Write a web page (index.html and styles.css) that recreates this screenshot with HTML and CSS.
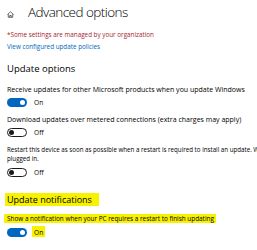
FILE: index.html
```html
<!DOCTYPE html>
<html>
<head>
<meta charset="utf-8">
<link rel="stylesheet" href="styles.css">
</head>
<body>
<div class="page">
  <div class="header">
    <svg class="home" width="7" height="7" viewBox="0 0 14 14"><path d="M1 7 L7 1.5 L13 7 M2.5 5.8 V12.5 H11.5 V5.8 M5.5 12.5 V9 H8.5 V12.5" fill="none" stroke="#222" stroke-width="1.3"/></svg>
    <h1 class="title">Advanced options</h1>
  </div>
  <p class="managed">*Some settings are managed by your organization</p>
  <p class="link">View configured update policies</p>
  <h2 class="section">Update options</h2>
  <p class="label">Receive updates for other Microsoft products when you update Windows</p>
  <div class="toggle-row"><span class="toggle on"><span class="knob"></span></span><span class="state">On</span></div>
  <p class="label">Download updates over metered connections (extra charges may apply)</p>
  <div class="toggle-row"><span class="toggle off"><span class="knob"></span></span><span class="state">Off</span></div>
  <p class="label wrap">Restart this device as soon as possible when a restart is required to install an update. Windows will display a notice before the restart, and your device must be on and<br>plugged in.</p>
  <div class="toggle-row r3"><span class="toggle off"><span class="knob"></span></span><span class="state">Off</span></div>
  <h2 class="section notif"><span class="hl">Update notifications</span></h2>
  <p class="label show"><span class="hl">Show a notification when your PC requires a restart to finish updating</span></p>
  <div class="toggle-row r4"><span class="toggle on"><span class="knob"></span></span><span class="state hl">On</span></div>
</div>
</body>
</html>
```
FILE: styles.css
```css
html, body { margin: 0; padding: 0; background: #fff; overflow: hidden; }
body { font-family: "Open Sans", "Noto Sans", sans-serif; color: #000; width: 257px; height: 250px; }
.page { padding-left: 7px; width: 250px; overflow: hidden; }
p, h1, h2 { margin: 0; font-weight: normal; }
.header { display: flex; align-items: center; margin-top: 2px; height: 20px; }
.home { margin-top: 4px; }
.title { font-size: 13.5px; font-weight: 300; line-height: 20px; margin-left: 14px; letter-spacing: -0.55px; }
.managed { font-size: 6.3px; line-height: 10px; margin-top: 8px; color: #a4262c; }
.link { font-size: 6.3px; line-height: 10px; margin-top: 2px; color: #0067b8; }
.section { font-size: 9.5px; line-height: 16px; margin-top: 9px; }
.label { font-size: 7px; line-height: 10px; margin-top: 8px; white-space: nowrap; }
.label.wrap { line-height: 9px; margin-top: 8px; font-size: 6.2px; }
.toggle-row { display: flex; align-items: center; margin-top: 3px; height: 9px; }
.toggle-row.r3 { margin-top: 5px; }
.toggle { box-sizing: border-box; width: 20px; height: 9px; border-radius: 5px; display: flex; align-items: center; padding: 0 2px; }
.toggle.on { background: #0067c0; justify-content: flex-end; }
.toggle.off { border: 1px solid #1a1a1a; justify-content: flex-start; padding: 0 1px; }
.knob { width: 5px; height: 5px; border-radius: 50%; }
.toggle.on .knob { background: #fff; }
.toggle.off .knob { background: #1a1a1a; }
.state { font-size: 6.6px; margin-left: 7px; line-height: 9px; }
.hl { background: #f8f200; }
.notif { margin-top: 16px; line-height: 13px; font-size: 9px; }
.notif .hl { display: inline-block; margin-left: -2px; padding: 0 7px 0 2px; }
.show { margin-top: 8px; line-height: 9px; font-size: 6.4px; }
.show .hl { display: inline-block; margin-left: -3px; padding: 0 2px 0 3px; }
.toggle-row.r4 { margin-top: 5px; }
.state.hl { display: inline-block; margin-left: 5px; padding: 3px 2px; line-height: 8px; }
```
